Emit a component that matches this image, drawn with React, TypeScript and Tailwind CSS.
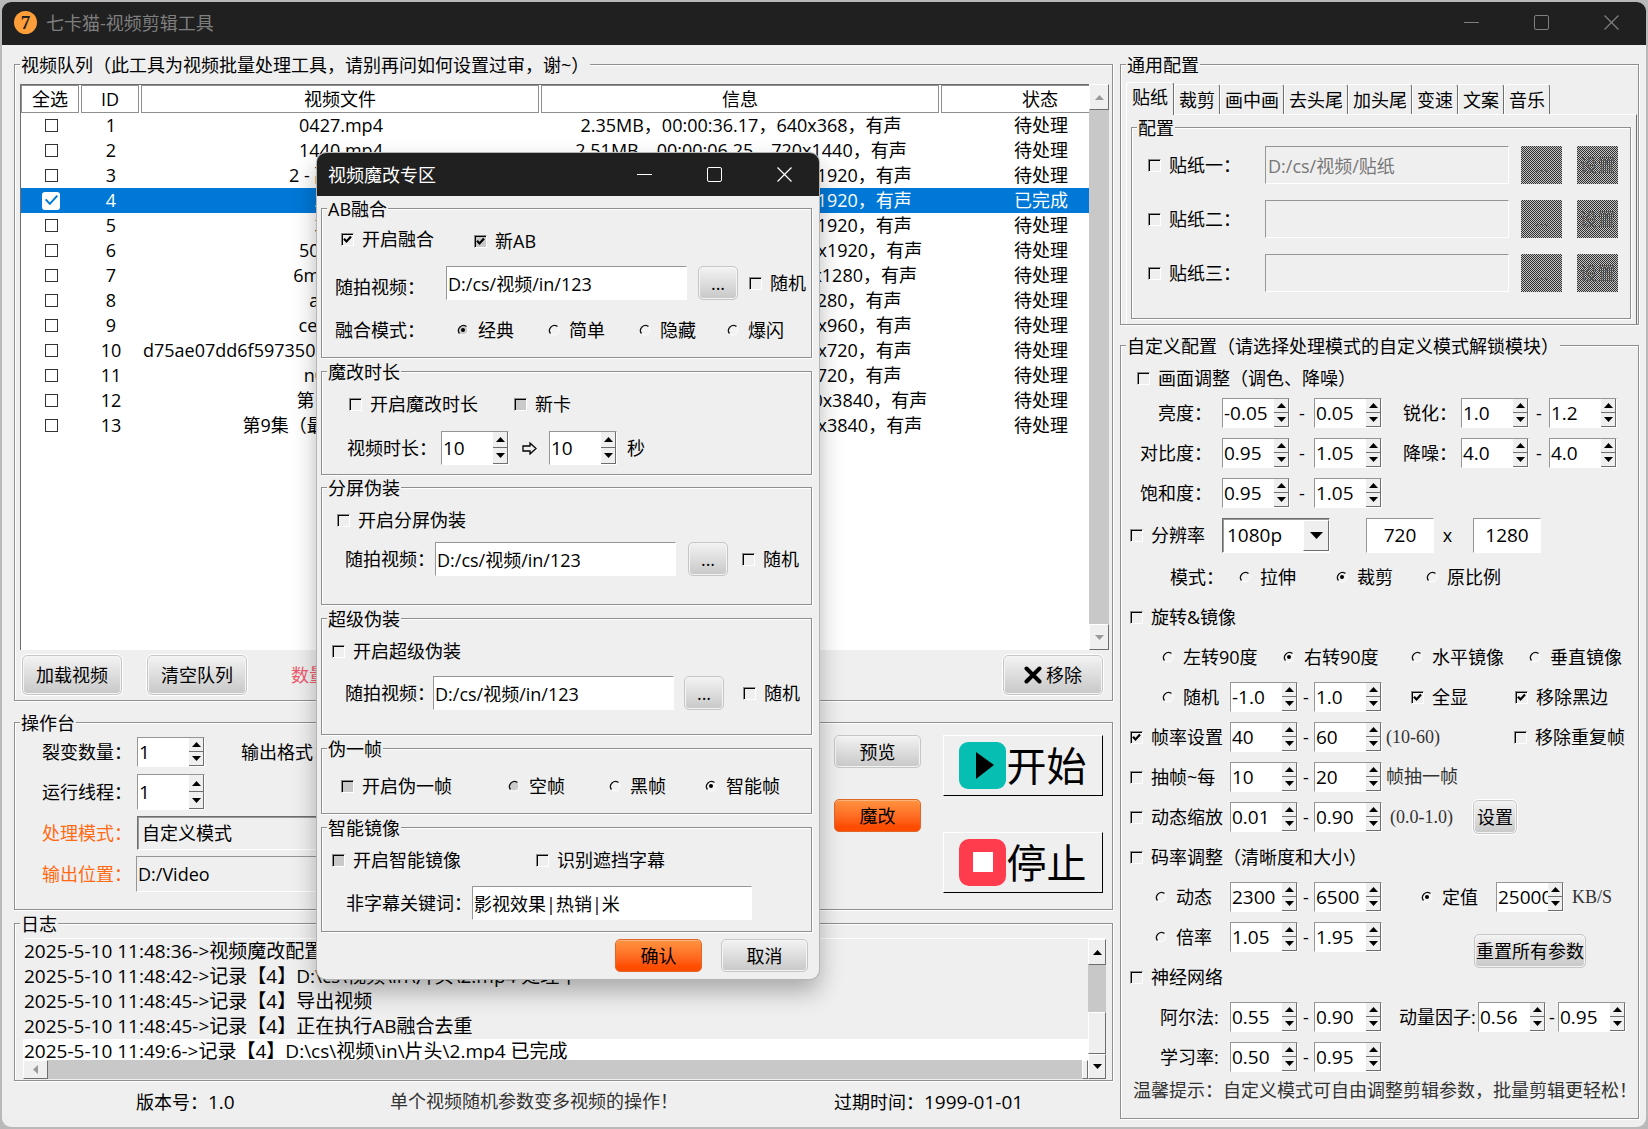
import React from "react";
import clsx from "clsx";

const rows = [
  { id: 1, file: "0427.mp4", info: "2.35MB，00:00:36.17，640x368，有声" },
  { id: 2, file: "1440.mp4", info: "2.51MB，00:00:06.25，720x1440，有声" },
  { id: 3, file: "2 - 副本.mp4", info: "8.24MB，00:00:15.04，1080x1920，有声" },
  { id: 4, file: "2.mp4", info: "8.24MB，00:00:15.04，1080x1920，有声", done: true },
  { id: 5, file: "3.mp4", info: "9.16MB，00:00:18.20，1080x1920，有声" },
  { id: 6, file: "5021.mp4", info: "115.87MB，00:00:24.11，1080x1920，有声" },
  { id: 7, file: "6min2.mp4", info: "106.02MB，00:00:33.40，720x1280，有声" },
  { id: 8, file: "ab.mp4", info: "3.4MB，00:00:12.08，720x1280，有声" },
  { id: 9, file: "cesi2.mp4", info: "112.35MB，00:01:02.50，540x960，有声" },
  { id: 10, file: "d75ae07dd6f597350c3e1b8a24f96d1e4b7.mp4", info: "17.25MB，00:00:41.33，1280x720，有声" },
  { id: 11, file: "n01.mp4", info: "5.9MB，00:00:30.02，1280x720，有声" },
  { id: 12, file: "第1集.mp4", info: "1112.60MB，00:02:10.45，2160x3840，有声" },
  { id: 13, file: "第9集（最终一集）.mp4", info: "198.72MB，00:01:55.12，2160x3840，有声" },
];

const logs = [
  "2025-5-10 11:48:36->视频魔改配置已保存",
  "2025-5-10 11:48:42->记录【4】D:\\cs\\视频\\in\\片头\\2.mp4 处理中",
  "2025-5-10 11:48:45->记录【4】导出视频",
  "2025-5-10 11:48:45->记录【4】正在执行AB融合去重",
  "2025-5-10 11:49:6->记录【4】D:\\cs\\视频\\in\\片头\\2.mp4 已完成",
];

const tabs = ["裁剪", "画中画", "去头尾", "加头尾", "变速", "文案", "音乐"];

const sunken =
  "border border-t-[#969696] border-l-[#969696] border-r-white border-b-white outline-none";
const raised =
  "border border-t-white border-l-white border-r-[#6e6e6e] border-b-[#6e6e6e] bg-[#efefef]";
const grayButton =
  "rounded-[5px] border border-[#c6c6c6] bg-linear-to-b from-[#f3f3f3] to-[#c8c8c8] shadow-[inset_0_0_0_1px_#f4f4f4]";
const orangeButton =
  "rounded-[5px] border border-[#e0662a] bg-linear-to-b from-[#ff9440] to-[#ff4d00] to-85% shadow-[inset_0_1px_0_#ffb27a]";
const dithered =
  "bg-[conic-gradient(#2f2f2f_25%,#c4c4c4_0_50%,#2f2f2f_0_75%,#c4c4c4_0)] bg-[length:2px_2px] text-[#585858]";
const brush = "font-['Liberation_Serif','Noto_Sans_CJK_SC',serif] text-[#333]";

type GroupProps = { title: string; className?: string; body?: string; children: React.ReactNode };

function Group({ title, className, body, children }: GroupProps) {
  return (
    <fieldset
      className={clsx(
        "min-w-0 border border-[#8f8f8f] shadow-[1px_1px_0_#fff,inset_1px_1px_0_#fff]",
        className
      )}
    >
      <legend className="ml-[5px] h-5 bg-[#efefef] px-px leading-[22px]">{title}</legend>
      <div className={body}>{children}</div>
    </fieldset>
  );
}

function Tick({ color = "#000", size = 9 }: { color?: string; size?: number }) {
  return (
    <svg className="pointer-events-none relative place-self-center" width={size} height={size} viewBox="0 0 9 9">
      <path d="M1 3.8 3.5 6.5 8 1.6" fill="none" stroke={color} strokeWidth={color === "#000" ? 2.2 : 1.2} />
    </svg>
  );
}

type CheckProps = { label: string; checked?: boolean; dim?: boolean; className?: string };

function Check({ label, checked, dim, className }: CheckProps) {
  return (
    <label className={clsx("flex shrink-0 items-center gap-2 whitespace-nowrap", className)}>
      <span className="grid size-[13px] shrink-0 *:[grid-area:1/1]">
        <input
          type="checkbox"
          defaultChecked={checked}
          className={clsx(
            "size-[13px] appearance-none border border-t-[#8a8a8a] border-l-[#8a8a8a] border-r-white border-b-white shadow-[inset_1px_1px_0_#000]",
            dim && "bg-[#c9c9c9]"
          )}
        />
        {checked && <Tick />}
      </span>
      {label}
    </label>
  );
}

function Radio({ label, name, checked, dim, className }: CheckProps & { name: string }) {
  return (
    <label className={clsx("flex shrink-0 items-center gap-[9px] whitespace-nowrap", className)}>
      <span className="grid size-3 shrink-0 *:[grid-area:1/1]">
        <input type="radio" name={name} defaultChecked={checked} className="size-3 appearance-none" />
        <svg className="pointer-events-none" width="12" height="12" viewBox="0 0 12 12">
          <circle cx="6" cy="6" r="5" fill={dim ? "#cbcbcb" : "#f2f2f2"} stroke="#fff" />
          <path d="M2.5 9.5A5 5 0 0 1 9.5 2.5" fill="none" stroke="#111" strokeWidth="1.3" />
          {checked && <circle cx="6" cy="6" r="2" fill="#000" />}
        </svg>
      </span>
      {label}
    </label>
  );
}

function Arrow({ up, className }: { up?: boolean; className?: string }) {
  return (
    <svg className={className} width="9" height="5" viewBox="0 0 9 5" fill="currentColor">
      <path d={up ? "M0 5 4.5 0 9 5Z" : "M0 0 4.5 5 9 0Z"} />
    </svg>
  );
}

function Spin({ value, label, className = "h-[30px]" }: { value: string; label: string; className?: string }) {
  return (
    <span className={clsx("flex w-[68px] shrink-0 bg-white", sunken, className)}>
      <input
        aria-label={label}
        defaultValue={value}
        className="h-full w-[51px] min-w-0 pl-px text-[19px] leading-6 outline-none"
      />
      <span className="flex w-[15px] flex-col border-r border-b border-[#6e6e6e] bg-[#efefef]">
        <button aria-label={`${label}加`} className="grid flex-1 place-items-center border-b border-[#6e6e6e]">
          <Arrow up />
        </button>
        <button aria-label={`${label}减`} className="grid flex-1 place-items-center">
          <Arrow />
        </button>
      </span>
    </span>
  );
}

function Range({ label, from, to, wide }: { label: string; from: string; to: string; wide?: boolean }) {
  return (
    <>
      <Spin label={`${label}下限`} value={from} />
      <span className={clsx("shrink-0 text-center", wide ? "w-6" : "w-4")}>-</span>
      <Spin label={`${label}上限`} value={to} />
    </>
  );
}

function Row({ className = "h-10", children }: { className?: string; children: React.ReactNode }) {
  return <div className={clsx("flex items-center", className)}>{children}</div>;
}

function WindowButtons() {
  return (
    <div className="ml-auto flex h-full">
      <button aria-label="最小化" className="grid w-[70px] place-items-center">
        <svg width="15" height="15" stroke="currentColor"><path d="M0 7.5h15" /></svg>
      </button>
      <button aria-label="最大化" className="grid w-[70px] place-items-center">
        <svg width="15" height="15" fill="none" stroke="currentColor"><rect x=".5" y=".5" width="14" height="14" rx="1.5" /></svg>
      </button>
      <button aria-label="关闭" className="grid w-[70px] place-items-center">
        <svg width="15" height="15" stroke="currentColor" strokeWidth="1.2"><path d="m.5.5 14 14m0-14-14 14" /></svg>
      </button>
    </div>
  );
}

function Queue() {
  return (
    <Group title="视频队列（此工具为视频批量处理工具，请别再问如何设置过审，谢~）" className="flex-1" body="pt-[10px] pb-[5px] pl-[5px] pr-[3px]">
      <div className="flex h-[566px]">
        <div className="min-w-0 flex-1 overflow-hidden border-t border-l border-[#6e6e6e] bg-white">
          <table className="w-[1120px] table-fixed border-collapse text-center whitespace-nowrap">
            <colgroup>
              <col className="w-[60px]" />
              <col className="w-[60px]" />
              <col className="w-[400px]" />
              <col className="w-[400px]" />
              <col className="w-[200px]" />
            </colgroup>
            <thead>
              <tr className="h-[28px]">
                {["全选", "ID", "视频文件", "信息", "状态"].map((h) => (
                  <th key={h} className="p-0 pr-0.5 font-normal">
                    <div className="border border-[#8f8f8f] leading-[26px]">{h}</div>
                  </th>
                ))}
              </tr>
            </thead>
            <tbody>
              {rows.map((r) => (
                <tr key={r.id} className={clsx("h-[25px] leading-[25px]", r.done && "bg-[#0078d7] text-white")}>
                  <td className="p-0">
                    <span className="mx-auto grid size-[18px] place-items-center *:[grid-area:1/1]">
                      <input
                        type="checkbox"
                        aria-label={`选择 ${r.file}`}
                        defaultChecked={r.done}
                        className={clsx(
                          "appearance-none bg-white",
                          r.done ? "size-[18px] rounded-[3px]" : "size-[13px] border border-[#333]"
                        )}
                      />
                      {r.done && <Tick color="#0078d7" size={15} />}
                    </span>
                  </td>
                  <td className="p-0">{r.id}</td>
                  <td className="p-0">{r.file}</td>
                  <td className="p-0">{r.info}</td>
                  <td className="p-0">{r.done ? "已完成" : "待处理"}</td>
                </tr>
              ))}
            </tbody>
          </table>
        </div>
        <div className="flex w-5 flex-col justify-between bg-[#c8c8c8] text-[#9a9a9a]">
          <button aria-label="向上滚动" className={clsx("grid h-[26px] place-items-center", raised)}><Arrow up /></button>
          <button aria-label="向下滚动" className={clsx("grid h-[26px] place-items-center", raised)}><Arrow /></button>
        </div>
      </div>
      <div className="mt-[5px] flex items-center pr-1.5 pl-0.5">
        <button className={clsx("h-10 w-[100px] outline outline-white", grayButton)}>加载视频</button>
        <button className={clsx("ml-[25px] h-10 w-[100px] outline outline-white", grayButton)}>清空队列</button>
        <span className="ml-11 text-[#ee5a6b]">数量：13</span>
        <button className={clsx("ml-auto flex h-10 w-[100px] items-center justify-center gap-1 outline outline-white", grayButton)}>
          <svg width="18" height="18" viewBox="0 0 18 18" stroke="#000" strokeWidth="4" strokeLinecap="round">
            <path d="m2.5 2.5 13 13m0-13-13 13" />
          </svg>
          移除
        </button>
      </div>
    </Group>
  );
}

function Console() {
  return (
    <Group title="操作台" className="mt-[11px] h-[198px]" body="flex">
      <div className="pl-[27px]">
        <Row>
          <span className="w-[95px]">裂变数量：</span>
          <Spin label="裂变数量" value="1" />
          <span className="ml-9">输出格式：</span>
        </Row>
        <Row>
          <span className="w-[95px]">运行线程：</span>
          <Spin label="运行线程" value="1" className="h-9" />
        </Row>
        <Row className="h-[42px]">
          <label htmlFor="mode" className="w-[95px] text-[#ff6a13]">处理模式：</label>
          <select
            id="mode"
            className="h-[34px] w-[320px] appearance-none border border-t-[#6e6e6e] border-l-[#6e6e6e] border-r-white border-b-white px-1 shadow-[inset_1px_1px_0_#999] outline-none"
          >
            <option>自定义模式</option>
          </select>
        </Row>
        <Row>
          <label htmlFor="out" className="w-[94px] text-[#ff6a13]">输出位置：</label>
          <input id="out" defaultValue="D:/Video" className={clsx("h-9 w-[320px] px-px", sunken)} />
        </Row>
      </div>
      <div className="mr-[22px] ml-auto flex flex-col gap-[31px] pt-[3px]">
        <button className={clsx("h-[33px] w-[87px]", grayButton)}>预览</button>
        <button className={clsx("h-[33px] w-[87px]", orangeButton)}>魔改</button>
      </div>
      <div className="mr-[9px] flex flex-col gap-9 pt-[3px]">
        <button className="flex h-[61px] w-[160px] items-center justify-center border border-white border-r-black border-b-black pr-px text-[40px] leading-[48px]">
          <svg className="mr-px" width="47" height="47" viewBox="0 0 47 47">
            <rect width="47" height="47" rx="9" fill="#06bfb2" />
            <path d="M17 10v27l18-14Z" fill="#000" />
          </svg>
          开始
        </button>
        <button className="flex h-[61px] w-[160px] items-center justify-center border border-white border-r-black border-b-black pr-px text-[40px] leading-[48px]">
          <svg className="mr-px" width="47" height="47" viewBox="0 0 47 47">
            <rect width="47" height="47" rx="10" fill="#ff3b4e" />
            <path d="M14 13h20v20H14Z" fill="#fff" />
          </svg>
          停止
        </button>
      </div>
    </Group>
  );
}

function Log() {
  return (
    <Group title="日志" className="mt-[3px] h-[168px]" body="pt-[5px] pr-1.5 pl-2">
      <div className="flex h-[141px] border-t border-white">
        <div className="flex min-w-0 flex-1 flex-col">
          <div className="h-[121px] overflow-hidden text-[19px]">
            {logs.map((l, i) => (
              <p key={i} className={clsx("h-[25px] pl-px leading-[25px] whitespace-nowrap", i === 4 && "bg-white")}>
                {l}
              </p>
            ))}
          </div>
          <div className="flex flex-1 bg-[#c8c8c8]">
            <button aria-label="向左滚动" className={clsx("grid w-[25px] place-items-center text-[#9a9a9a]", raised)}>
              <Arrow up className="-rotate-90" />
            </button>
            <span className={clsx("ml-auto w-1.5", raised)} />
          </div>
        </div>
        <div className="flex w-[18px] flex-col bg-[#c8c8c8]">
          <button aria-label="日志上滚" className={clsx("grid h-[26px] place-items-center", raised)}><Arrow up /></button>
          <span className={clsx("mt-auto h-[42px]", raised)} />
          <button aria-label="日志下滚" className={clsx("grid h-[25px] place-items-center", raised)}><Arrow /></button>
        </div>
      </div>
    </Group>
  );
}

function Stickers() {
  return (
    <Group title="通用配置" className="h-[271px]" body="pt-2 pr-px pl-[5px]">
      <div role="tablist" className="flex h-8 items-end">
        <button role="tab" aria-selected="true" className="z-10 -mb-px h-[33px] rounded-t-[3px] border border-b-0 border-t-white border-l-white border-r-[#6e6e6e] bg-[#efefef] px-[5px] pb-1">
          贴纸
        </button>
        {tabs.map((t) => (
          <button key={t} role="tab" aria-selected="false" className="h-[30px] rounded-t-[3px] border border-b-0 border-t-white border-l-white border-r-[#6e6e6e] px-1">
            {t}
          </button>
        ))}
      </div>
      <div className="h-[210px] border border-b-0 border-t-white border-l-white border-r-[#6e6e6e] pt-0.5 pr-[5px] pl-1">
        <Group title="配置" className="h-[202px]" body="pt-px">
          {["一", "二", "三"].map((n, i) => (
            <div key={n} className="flex h-[54px] items-center pr-3 pl-4">
              <Check label={`贴纸${n}：`} className="w-[117px]" />
              <input
                aria-label={`贴纸${n}路径`}
                disabled
                defaultValue={i === 0 ? "D:/cs/视频/贴纸" : ""}
                className={clsx("h-[38px] min-w-0 flex-1 px-0.5 text-[#777]", sunken)}
              />
              <button disabled className={clsx("ml-3 h-[38px] w-[41px]", dithered)}>...</button>
              <button disabled className={clsx("ml-[15px] h-[38px] w-[41px]", dithered)}>设置</button>
            </div>
          ))}
        </Group>
      </div>
    </Group>
  );
}

const labelCell = "w-[92px] shrink-0 pr-[10px] text-right";

function Custom() {
  return (
    <Group title="自定义配置（请选择处理模式的自定义模式解锁模块）" className="mt-[10px] flex-1" body="pl-[9px]">
      <Row className="h-[38px] pt-2 pl-[7px]">
        <Check label="画面调整（调色、降噪）" />
      </Row>
      <Row>
        <span className={labelCell}>亮度：</span>
        <Range label="亮度" from="-0.05" to="0.05" wide />
        <span className="ml-[21px] w-[58px]">锐化：</span>
        <Spin label="锐化下限" value="1.0" />
        <span className="w-5 text-center">-</span>
        <Spin label="锐化上限" value="1.2" />
      </Row>
      <Row>
        <span className={labelCell}>对比度：</span>
        <Range label="对比度" from="0.95" to="1.05" wide />
        <span className="ml-[21px] w-[58px]">降噪：</span>
        <Spin label="降噪下限" value="4.0" />
        <span className="w-5 text-center">-</span>
        <Spin label="降噪上限" value="4.0" />
      </Row>
      <Row>
        <span className={labelCell}>饱和度：</span>
        <Range label="饱和度" from="0.95" to="1.05" wide />
      </Row>
      <Row className="h-11">
        <Check label="分辨率" className="w-[92px]" />
        <span className="grid w-[108px] *:[grid-area:1/1]">
          <select
            aria-label="分辨率"
            className="h-[35px] appearance-none border border-t-[#6e6e6e] border-l-[#6e6e6e] border-r-white border-b-white bg-white px-1 text-[19px] shadow-[inset_1px_1px_0_#999] outline-none"
          >
            <option>1080p</option>
          </select>
          <span className={clsx("pointer-events-none my-0.5 mr-px grid w-[26px] place-items-center justify-self-end", raised)}>
            <svg width="13" height="7"><path d="M0 0h13L6.500 7Z" /></svg>
          </span>
        </span>
        <input aria-label="宽" defaultValue="720" className={clsx("ml-9 h-[35px] w-[68px] bg-white text-center text-[19px]", sunken)} />
        <span className="w-[39px] pr-3 text-center">x</span>
        <input aria-label="高" defaultValue="1280" className={clsx("h-[35px] w-[68px] bg-white text-center text-[19px]", sunken)} />
      </Row>
      <Row className="h-10 pl-10">
        <span className="w-[69px]">模式：</span>
        <Radio name="fit" label="拉伸" className="w-[97px]" />
        <Radio name="fit" label="裁剪" checked className="w-[90px]" />
        <Radio name="fit" label="原比例" />
      </Row>
      <Row>
        <Check label="旋转&镜像" />
      </Row>
      <Row className="h-10 pl-8">
        <Radio name="rotate" label="左转90度" className="w-[121px]" />
        <Radio name="rotate" label="右转90度" checked className="w-[128px]" />
        <Radio name="rotate" label="水平镜像" className="w-[118px]" />
        <Radio name="rotate" label="垂直镜像" />
      </Row>
      <Row className="h-10 pl-8">
        <Radio name="rotate" label="随机" className="w-[68px]" />
        <Range label="旋转" from="-1.0" to="1.0" />
        <Check label="全显" checked className="ml-[29px] w-[104px]" />
        <Check label="移除黑边" checked />
      </Row>
      <Row>
        <Check label="帧率设置" checked className="w-[100px]" />
        <Range label="帧率" from="40" to="60" />
        <span className={clsx("ml-1 w-32", brush)}>(10-60)</span>
        <Check label="移除重复帧" />
      </Row>
      <Row>
        <Check label="抽帧~每" className="w-[100px]" />
        <Range label="抽帧" from="10" to="20" />
        <span className={clsx("ml-1", brush)}>帧抽一帧</span>
      </Row>
      <Row>
        <Check label="动态缩放" className="w-[100px]" />
        <Range label="缩放" from="0.01" to="0.90" />
        <span className={clsx("ml-2 w-[83px]", brush)}>(0.0-1.0)</span>
        <button className={clsx("h-[34px] w-11 outline outline-white", grayButton)}>设置</button>
      </Row>
      <Row>
        <Check label="码率调整（清晰度和大小）" />
      </Row>
      <Row className="h-10 pl-[25px]">
        <Radio name="rate" label="动态" className="w-[75px]" />
        <Range label="码率" from="2300" to="6500" />
        <Radio name="value" label="定值" checked className="ml-[39px] w-[75px]" />
        <Spin label="定值" value="25000" />
        <span className={clsx("ml-2", brush)}>KB/S</span>
      </Row>
      <Row className="h-10 pl-[25px]">
        <Radio name="rate" label="倍率" className="w-[75px]" />
        <Range label="倍率" from="1.05" to="1.95" />
        <button className={clsx("mt-7 ml-[92px] h-[34px] w-[112px] whitespace-nowrap", grayButton)}>重置所有参数</button>
      </Row>
      <Row>
        <Check label="神经网络" />
      </Row>
      <Row>
        <span className="w-[100px] pr-[3px] pl-[30px] whitespace-nowrap">阿尔法:</span>
        <Range label="阿尔法" from="0.55" to="0.90" />
        <span className="ml-[17px] w-[79px] whitespace-nowrap">动量因子:</span>
        <Spin label="动量因子下限" value="0.56" />
        <span className="w-3 text-center">-</span>
        <Spin label="动量因子上限" value="0.95" />
      </Row>
      <Row>
        <span className="w-[100px] pr-[3px] pl-[30px] whitespace-nowrap">学习率:</span>
        <Range label="学习率" from="0.50" to="0.95" />
      </Row>
      <p className={clsx("pl-[3px] leading-7 whitespace-nowrap", brush)}>
        温馨提示：自定义模式可自由调整剪辑参数，批量剪辑更轻松！
      </p>
    </Group>
  );
}

function PathRow({ labelClass, gapClass, randomClass }: { labelClass: string; gapClass: string; randomClass: string }) {
  return (
    <>
      <span className={clsx("shrink-0 whitespace-nowrap", labelClass)}>随拍视频：</span>
      <input aria-label="随拍视频路径" defaultValue="D:/cs/视频/in/123" className={clsx("h-[34px] w-[241px] shrink-0 bg-white px-px", sunken)} />
      <button className={clsx("h-[34px] w-10 shrink-0", grayButton, gapClass)}>...</button>
      <Check label="随机" className={randomClass} />
    </>
  );
}

function Dialog() {
  return (
    <div
      role="dialog"
      aria-label="视频魔改专区"
      className="absolute top-[153px] left-[317px] w-[502px] overflow-hidden rounded-[9px] bg-[#efefef] pb-[7px] shadow-[0_0_0_1px_#b4b4b4,0_12px_24px_rgba(0,0,0,0.3)]"
    >
      <div className="flex h-[43px] items-center bg-[#202020] pl-[11px] text-white">
        视频魔改专区
        <WindowButtons />
      </div>
      <div className="pt-[2px] pr-[7px] pl-1">
        <Group title="AB融合" className="h-[160px]" body="pl-[13px]">
          <Row className="h-[42px] pl-1.5">
            <Check label="开启融合" checked className="w-[133px]" />
            <Check label="新AB" checked dim className="pt-1" />
          </Row>
          <Row className="h-[46px]">
            <PathRow labelClass="w-[111px] pt-2" gapClass="ml-[11px]" randomClass="ml-[11px]" />
          </Row>
          <Row className="h-12">
            <span className="w-[122px]">融合模式：</span>
            <Radio name="blend" label="经典" checked dim className="w-[91px]" />
            <Radio name="blend" label="简单" className="w-[91px]" />
            <Radio name="blend" label="隐藏" className="w-[88px]" />
            <Radio name="blend" label="爆闪" />
          </Row>
        </Group>
        <Group title="魔改时长" className="mt-[3px] h-[114px]" body="pl-[25px]">
          <Row className="h-[46px] pl-0.5">
            <Check label="开启魔改时长" className="w-[165px]" />
            <Check label="新卡" dim />
          </Row>
          <Row className="h-[42px]">
            <span className="w-[94px]">视频时长：</span>
            <Spin label="最短时长" value="10" className="h-[34px]" />
            <span className="grid w-10 place-items-center">
              <svg width="15" height="13" viewBox="0 0 15 13" fill="none" stroke="#000" strokeWidth="1.3">
                <path d="M1 4h7V1l6 5.500-6 5.500V9H1Z" />
              </svg>
            </span>
            <Spin label="最长时长" value="10" className="h-[34px]" />
            <span className="ml-[10px]">秒</span>
          </Row>
        </Group>
        <Group title="分屏伪装" className="mt-0.5 h-[128px]" body="pl-[15px]">
          <Row className="h-[46px]">
            <Check label="开启分屏伪装" />
          </Row>
          <Row className="h-8 pl-2">
            <PathRow labelClass="w-[90px]" gapClass="ml-3" randomClass="ml-[14px]" />
          </Row>
        </Group>
        <Group title="超级伪装" className="mt-[3px] h-[127px]" body="pl-[10px]">
          <Row className="h-[46px]">
            <Check label="开启超级伪装" />
          </Row>
          <Row className="h-[38px] pl-[13px]">
            <PathRow labelClass="w-[88px]" gapClass="ml-[10px]" randomClass="ml-[19px]" />
          </Row>
        </Group>
        <Group title="伪一帧" className="mt-[3px] h-[76px]" body="pl-[19px]">
          <Row className="h-14">
            <Check label="开启伪一帧" dim className="w-[167px]" />
            <Radio name="frame" label="空帧" dim className="w-[101px]" />
            <Radio name="frame" label="黑帧" className="w-[96px]" />
            <Radio name="frame" label="智能帧" checked />
          </Row>
        </Group>
        <Group title="智能镜像" className="mt-[3px] h-[115px]" body="pl-[10px]">
          <Row className="h-[46px]">
            <Check label="开启智能镜像" dim className="w-[204px]" />
            <Check label="识别遮挡字幕" />
          </Row>
          <Row className="h-10 pl-[14px]">
            <label htmlFor="words" className="w-[126px]">非字幕关键词：</label>
            <input id="words" defaultValue="影视效果|热销|米" className={clsx("h-[34px] w-[280px] bg-white px-px", sunken)} />
          </Row>
        </Group>
        <div className="mt-[7px] flex justify-end gap-[19px] pr-1">
          <button className={clsx("h-[33px] w-[87px]", orangeButton)}>确认</button>
          <button className={clsx("h-[33px] w-[87px]", grayButton)}>取消</button>
        </div>
      </div>
    </div>
  );
}

export default function App() {
  return (
    <div className="relative min-h-screen bg-[#b9b9b9] px-0.5 pt-0.5 pb-0.5 font-['Open_Sans','Noto_Sans_CJK_SC',sans-serif] text-[18px] leading-6 text-black">
      <div className="overflow-hidden rounded-[9px] bg-[#efefef]">
        <header className="flex h-[43px] items-center bg-[#202020] pb-0.5 pl-3 text-[#7f7f7f]">
          <span className="mr-[9px] grid size-[23px] place-items-center rounded-full bg-[#fd9e3a] font-['Liberation_Serif',serif] text-[19px] leading-5 font-bold text-[#202020]">
            7
          </span>
          七卡猫-视频剪辑工具
          <WindowButtons />
        </header>
        <main className="flex gap-[7px] px-[7px] pt-[9px] pl-3">
          <div className="flex min-w-0 flex-1 flex-col">
            <Queue />
            <Console />
            <Log />
            <footer className="grid h-[46px] grid-cols-[254px_444px_auto] items-center pb-1 pl-[122px]">
              <span>版本号：<span className="text-[19px]">1.0</span></span>
              <span className={brush}>单个视频随机参数变多视频的操作！</span>
              <span>过期时间：<span className="text-[19px]">1999-01-01</span></span>
            </footer>
          </div>
          <div className="flex w-[519px] shrink-0 flex-col pb-2">
            <Stickers />
            <Custom />
          </div>
        </main>
      </div>
      <Dialog />
    </div>
  );
}
